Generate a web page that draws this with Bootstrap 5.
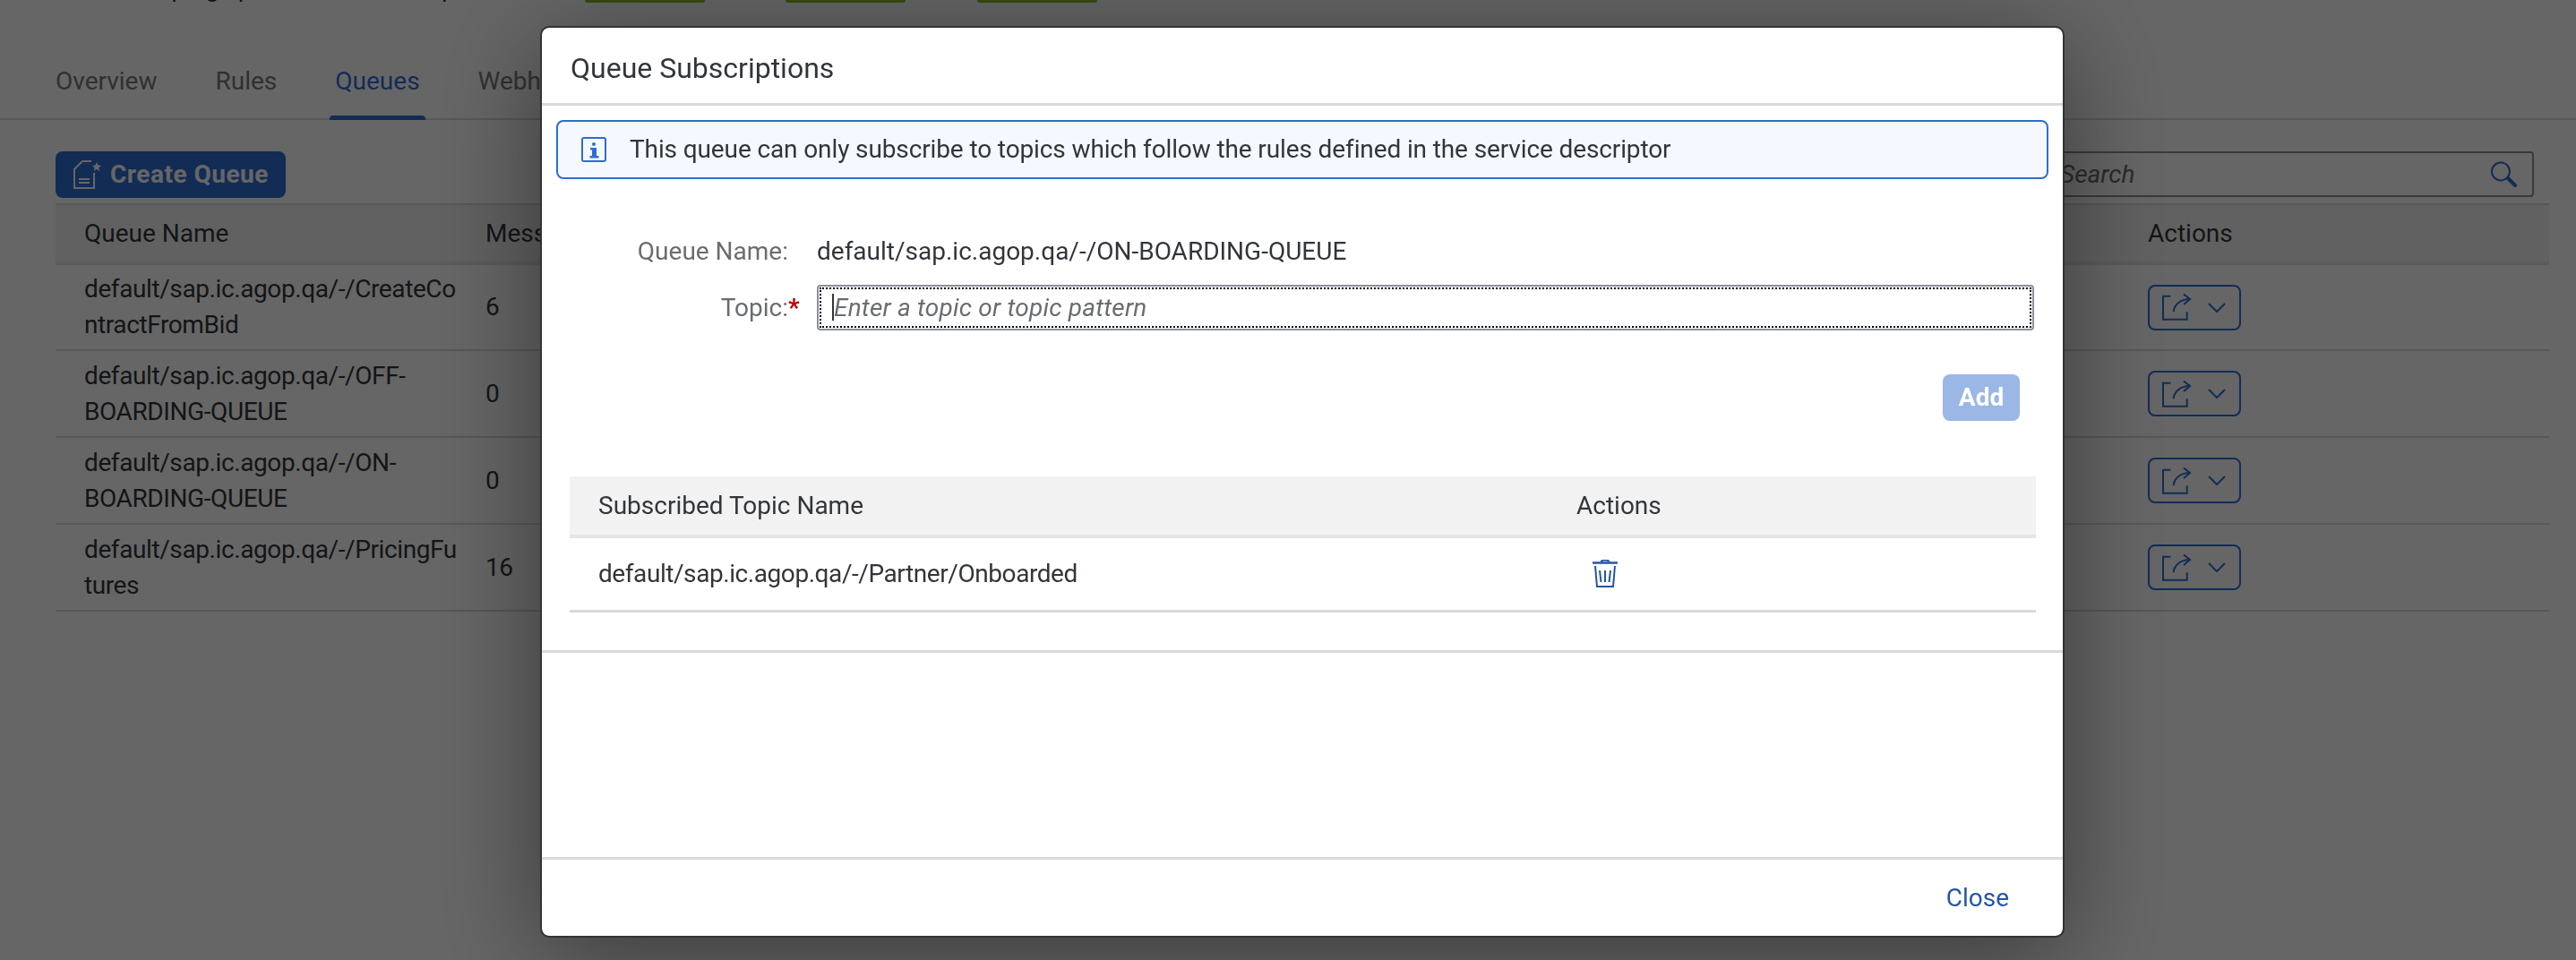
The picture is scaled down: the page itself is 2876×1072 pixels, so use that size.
<!DOCTYPE html>
<html lang="en">
<head>
<meta charset="UTF-8" />
<title>Queue Subscriptions</title>
<link href="https://cdn.jsdelivr.net/npm/bootstrap@5.3.0/dist/css/bootstrap.min.css" rel="stylesheet" />
<style>
body { background: #fff; color: #32363a; font-family: Roboto, "Noto Sans", sans-serif; font-size: 28px; overflow: hidden; height: 1072px; }
/* page behind the dialog */
.top-strip { height: 60px; overflow: hidden; display: flex; padding-left: 62px; }
.top-title { margin-top: -33px; line-height: 40px; white-space: nowrap; width: 591px; flex: none; }
.top-pill { width: 134px; height: 3px; background: #8fb82a; border-radius: 0 0 8px 8px; margin-right: 90px; }
.top-pill + .top-pill + .top-pill { margin-left: -10px; }
.tabs-bar { border-bottom: 2px solid #d9d9d9; height: 74px; padding-left: 62px; gap: 65px; }
.tab-link { color: #777a7d; font-size: 28px; line-height: 62px; text-decoration: none; position: relative; height: 72px; }
.tab-link.on { color: #2f6ed5; }
.tab-link.on::after { content: ""; position: absolute; left: -6px; right: -6px; bottom: -2px; height: 5px; background: #2f6ed5; border-radius: 4px 4px 0 0; }
.tools-row { padding: 35px 47px 6px 62px; height: 93px; }
.btn-create { background: #2f6ed5; color: #fff; font-weight: 700; font-size: 28px; letter-spacing: .5px; height: 52px; width: 257px; padding: 0 0 0 20px; border: 0; border-radius: 8px; display: flex; align-items: center; gap: 10px; }
.search-box { width: 560px; height: 51px; border: 2px solid #89919a; border-radius: 4px; font-style: italic; color: #6a6d70; display: flex; align-items: center; justify-content: space-between; padding: 0 17px 0 29px; }
.q-table { table-layout: fixed; width: 2784px; margin: 0 0 0 62px; color: #32363a; border-top: 2px solid #d9d9d9; }
.q-table > :not(caption) > * > * { background: transparent; border: 0; padding: 0 32px; vertical-align: middle; color: inherit; box-shadow: none; }
.q-table > :not(caption) > * > :first-child { padding-right: 0; }
.q-table > :not(caption) > * > :nth-child(2) { padding-left: 28px; }
.q-table thead tr { background: #f2f2f2; height: 66px; border-bottom: 4px solid #e5e5e5; }
.q-table thead th { font-weight: 400; }
.q-table tbody tr { height: 97px; border-bottom: 2px solid #d9d9d9; }
.q-table tbody td { line-height: 40px; overflow-wrap: anywhere; letter-spacing: -.4px; }
.col-qname { width: 452px; }
.col-qmsg { width: 1852px; }
.btn-share { width: 104px; height: 51px; border: 2px solid #2f6ed5; border-radius: 8px; background: transparent; padding: 0 0 0 14px; display: flex; align-items: center; gap: 18px; }
/* dialog */
.modal-backdrop.show { opacity: .6; }
.modal-dialog.qs-dialog { max-width: none; width: 1702px; margin: 29px 0 0 603px; }
.qs-dialog .modal-content { height: 1018px; border: 2px solid #333; border-radius: 10px; box-shadow: 0 20px 120px rgba(0,0,0,.45); color: #32363a; }
.qs-dialog .modal-header { height: 87px; padding: 6px 32px 0; border-bottom: 3px solid #d9d9d9; align-items: center; }
.qs-title { font-size: 32px; font-weight: 400; margin: 0; }
.qs-alert { margin: 16px 16px 0 16px; height: 66px; padding: 0 0 0 26px; gap: 26px; background: #f5f9ff; border: 2px solid #2f6ccf; border-radius: 8px; color: #32363a; display: flex; align-items: center; letter-spacing: -.12px; }
.qs-form { padding: 60px 32px 0 32px; }
.qs-row { display: flex; align-items: center; }
.qs-label { width: 275px; flex: none; text-align: right; color: #6a6d70; padding-right: 32px; }
.qs-req { color: #bb0000; font-weight: 700; width: 0; display: inline-block; white-space: nowrap; }
.qs-input-wrap { flex: 1; position: relative; }
.qs-input { height: 51px; border: 2px solid #89919a; border-radius: 4px; outline: 2px dotted #000; outline-offset: -5px; padding: 0 17px; font-size: 28px; letter-spacing: .2px; font-family: inherit; color: #32363a; box-shadow: none; }
.qs-input::placeholder { color: #6a6d70; font-style: italic; opacity: 1; }
.qs-caret { position: absolute; left: 17px; top: 10px; width: 2px; height: 30px; background: #32363a; }
.btn-add { background: #9ab7e6; color: #fff; font-weight: 700; font-size: 28px; width: 86px; height: 52px; padding: 0; border: 0; border-radius: 8px; }
.add-row { margin-top: 49px; padding-right: 16px; }
.s-table { table-layout: fixed; width: 1637px; margin: 62px 0 0 31px; color: #32363a; }
.s-table > :not(caption) > * > * { background: transparent; border: 0; padding: 0 32px; vertical-align: middle; color: inherit; box-shadow: none; }
.s-table thead tr { background: #f2f2f2; height: 67px; border-bottom: 4px solid #e5e5e5; }
.s-table thead th { font-weight: 400; }
.s-table tbody tr { height: 83px; border-bottom: 3px solid #d9d9d9; }
.s-table tbody td { letter-spacing: -.43px; }
.col-topic { width: 1092px; }
.ico-trash { display: block; margin-left: 18px; }
.qs-sep { height: 45px; border-bottom: 3px solid #d9d9d9; }
.qs-footer { border-top: 3px solid #d9d9d9; padding: 0 32px; margin-top: auto; height: 88px; }
.btn-close-link { color: #2455a4; font-size: 28px; background: none; border: 0; padding: 0 28px 0 0; }
</style>
</head>
<body>

<div class="top-strip">
    <div class="top-title">Active on: ping | push to all hosts up</div>
    <div class="top-pill"></div><div class="top-pill"></div><div class="top-pill"></div>
</div>

<div class="tabs-bar d-flex">
    <a class="tab-link" href="#">Overview</a>
    <a class="tab-link" href="#">Rules</a>
    <a class="tab-link on" href="#">Queues</a>
    <a class="tab-link" href="#">Webhooks</a>
</div>

<div class="tools-row d-flex justify-content-between">
    <button class="btn-create">
        <svg width="31" height="32" viewBox="0 0 31 32" fill="none" stroke="#fff" stroke-width="2"><path d="M10 1H20M10 1L1 10V31H23V14M6 21H18M6 25H18"/><path d="M26 2l1.600 3.600 3.400.4-2.600 2.400.8 3.600-3.200-1.900-3.200 1.900.8-3.600L21 6l3.400-.4z" fill="#fff" stroke="none"/></svg>
        Create Queue
    </button>
    <div class="search-box">
        <span>Search</span>
        <svg width="30" height="30" viewBox="0 0 30 30" fill="none" stroke="#2f6ed5"><circle cx="12" cy="11.500" r="10" stroke-width="2"/><path d="M20 19L28 27" stroke-width="4" stroke-linecap="round"/></svg>
    </div>
</div>

<table class="table q-table">
    <colgroup><col class="col-qname"><col class="col-qmsg"><col></colgroup>
    <thead><tr><th>Queue Name</th><th>Messages</th><th>Actions</th></tr></thead>
    <tbody id="queueRows"></tbody>
</table>

<div class="modal-backdrop show"></div>
<div class="modal d-block">
    <div class="modal-dialog qs-dialog">
        <div class="modal-content">
            <div class="modal-header"><h5 class="qs-title">Queue Subscriptions</h5></div>
            <div class="qs-alert">
                <svg width="28" height="28" viewBox="0 0 28 28" fill="none"><rect x="1" y="1" width="26" height="26" rx="2" stroke="#2f6ccf" stroke-width="2"/><circle cx="14" cy="8" r="2" fill="#2f6ccf"/><path d="M10 12h7v9h2.500v2.500H9.500V21H12v-6.500h-2z" fill="#2f6ccf"/></svg>
                <span>This queue can only subscribe to topics which follow the rules defined in the service descriptor</span>
            </div>
            <div class="qs-form">
                <div class="qs-row mb-3">
                    <div class="qs-label">Queue Name:</div>
                    <div>default/sap.ic.agop.qa/-/ON-BOARDING-QUEUE</div>
                </div>
                <div class="qs-row">
                    <div class="qs-label">Topic:<span class="qs-req">*</span></div>
                    <div class="qs-input-wrap">
                        <input class="form-control qs-input" placeholder="Enter a topic or topic pattern" />
                        <div class="qs-caret"></div>
                    </div>
                </div>
                <div class="d-flex justify-content-end add-row"><button class="btn-add">Add</button></div>
            </div>
            <table class="table s-table">
                <colgroup><col class="col-topic"><col></colgroup>
                <thead><tr><th>Subscribed Topic Name</th><th>Actions</th></tr></thead>
                <tbody><tr>
                    <td>default/sap.ic.agop.qa/-/Partner/Onboarded</td>
                    <td>
                        <svg width="28" height="32" viewBox="0 0 28 32" fill="none" stroke="#2455a4" class="ico-trash"><path d="M0 3.500H28" stroke-width="2.500"/><path d="M9 2Q14 -1 19 2" stroke-width="2"/><path d="M3 7L5 30H23L25 7" stroke-width="2"/><path d="M8 12L9.500 25M14 12V25M20 12L18.500 25" stroke-width="2"/></svg>
                    </td>
                </tr></tbody>
            </table>
            <div class="qs-sep"></div>
            <div class="qs-footer d-flex align-items-center justify-content-end"><button class="btn-close-link">Close</button></div>
        </div>
    </div>
</div>

<script>
    // Linhas da tabela de filas
    const filas = [
        ['default/sap.ic.agop.qa/-/CreateContractFromBid', 6],
        ['default/sap.ic.agop.qa/-/OFF-BOARDING-QUEUE', 0],
        ['default/sap.ic.agop.qa/-/ON-BOARDING-QUEUE', 0],
        ['default/sap.ic.agop.qa/-/PricingFutures', 16]
    ];
    const iconeShare = '<svg width="33" height="30" viewBox="0 0 33 30" fill="none" stroke="#2f6ed5" stroke-width="2"><path d="M9.300 2.700H1V28.700H27.700V20.300"/><path d="M12.700 20.300C12.700 13 20 6 31 6M24 .5L31 6L24 12"/></svg>';
    const iconeSeta = '<svg width="20" height="11" viewBox="0 0 20 11" fill="none" stroke="#2f6ed5" stroke-width="2"><path d="M1 1L10 10L19 1"/></svg>';
    document.getElementById('queueRows').innerHTML = filas.map(f =>
        `<tr><td>${f[0]}</td><td>${f[1]}</td><td><button class="btn-share">${iconeShare}${iconeSeta}</button></td></tr>`
    ).join('');
</script>
<script src="https://cdn.jsdelivr.net/npm/bootstrap@5.3.0/dist/js/bootstrap.bundle.min.js"></script>
</body>
</html>
